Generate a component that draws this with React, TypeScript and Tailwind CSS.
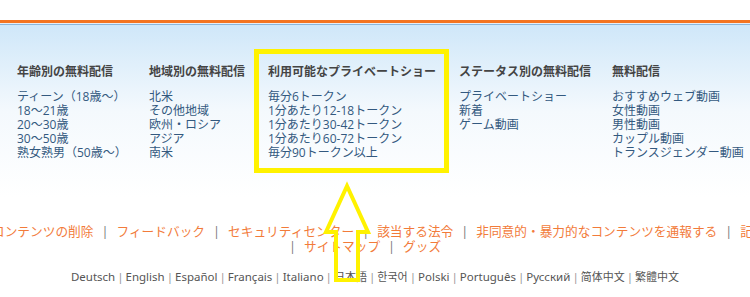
import React from 'react';

// ─── Data ─────────────────────────────────────────────────────────────────────

interface Column {
  title: string;
  width: string;
  items: string[];
}

const columns: Column[] = [
  {
    title: '年齢別の無料配信',
    width: 'w-[132px]',
    items: ['ティーン（18歳〜）', '18〜21歳', '20〜30歳', '30〜50歳', '熟女熟男（50歳〜）'],
  },
  {
    title: '地域別の無料配信',
    width: 'w-[119px]',
    items: ['北米', 'その他地域', '欧州・ロシア', 'アジア', '南米'],
  },
  {
    title: '利用可能なプライベートショー',
    width: 'w-[191px]',
    items: ['毎分6トークン', '1分あたり12-18トークン', '1分あたり30-42トークン', '1分あたり60-72トークン', '毎分90トークン以上'],
  },
  {
    title: 'ステータス別の無料配信',
    width: 'w-[153px]',
    items: ['プライベートショー', '新着', 'ゲーム動画'],
  },
  {
    title: '無料配信',
    width: 'w-[140px]',
    items: ['おすすめウェブ動画', '女性動画', '男性動画', 'カップル動画', 'トランスジェンダー動画'],
  },
];

const footerRow1 = [
  'コンテンツの削除',
  'フィードバック',
  'セキュリティセンター',
  '該当する法令',
  '非同意的・暴力的なコンテンツを通報する',
  '記録保管',
];

const footerRow2 = ['サイトマップ', 'グッズ'];

const languages: { label: string; cjk?: boolean }[] = [
  { label: 'Deutsch' },
  { label: 'English' },
  { label: 'Español' },
  { label: 'Français' },
  { label: 'Italiano' },
  { label: '日本語', cjk: true },
  { label: '한국어', cjk: true },
  { label: 'Polski' },
  { label: 'Português' },
  { label: 'Русский' },
  { label: '简体中文', cjk: true },
  { label: '繁體中文', cjk: true },
];

// ─── Pieces ───────────────────────────────────────────────────────────────────

function Sep() {
  return <span className="px-[8px] text-[#777]">|</span>;
}

function Arrow() {
  return (
    <svg
      className="absolute left-[320px] top-[180px]"
      width={54}
      height={106}
      viewBox="0 0 54 106"
      fill="none"
      aria-hidden="true"
    >
      <polygon
        points="27,6 6,52 16,52 16,100 38,100 38,52 48,52"
        stroke="#fff200"
        strokeWidth={4}
        strokeLinejoin="miter"
      />
    </svg>
  );
}

// ─── Component ────────────────────────────────────────────────────────────────

export default function App() {
  return (
    <div
      className="relative h-[297px] w-[750px] overflow-hidden bg-white"
      style={{ fontFamily: '"Open Sans", "Noto Sans CJK JP", sans-serif' }}
    >
      {/* Top bars */}
      <div className="h-[20px]" />
      <div className="h-[3px] bg-[#f47420]" />
      <div className="h-[1px] bg-[#e6eef6]" />
      <div className="h-[1px] bg-[#8db6da]" />

      {/* Category columns */}
      <div className="flex h-[172px] bg-gradient-to-b from-[#cfe7f9] via-[#f4f9fd] via-50% to-white pl-[17px] pt-[39px]">
        {columns.map((col) => (
          <div key={col.title} className={`${col.width} shrink-0`}>
            <div className="whitespace-nowrap text-[12px] font-bold leading-[16px] text-[#444]">{col.title}</div>
            <ul className="mt-[10px] text-[12px] leading-[14px] text-[#33597f]">
              {col.items.map((item) => (
                <li key={item} className="whitespace-nowrap">{item}</li>
              ))}
            </ul>
          </div>
        ))}
      </div>

      {/* Footer links */}
      <div className="mt-[27px] whitespace-nowrap text-[12.7px] leading-[15px] text-[#f27b3a]">
        <div className="-ml-[8px]">
          {footerRow1.map((l, i) => (
            <React.Fragment key={l}>
              {i > 0 && <Sep />}
              <span>{l}</span>
            </React.Fragment>
          ))}
        </div>
        <div className="ml-[281px]">
          {footerRow2.map((l) => (
            <React.Fragment key={l}>
              <Sep />
              <span>{l}</span>
            </React.Fragment>
          ))}
        </div>
      </div>

      {/* Languages */}
      <div
        className="mt-[15px] flex justify-center text-[11.5px] leading-[16px] text-[#555]"
        style={{ fontFamily: '"Noto Sans", "Noto Sans CJK JP", "Noto Sans CJK KR", sans-serif' }}
      >
        {languages.map((l, i) => (
          <React.Fragment key={l.label}>
            {i > 0 && <span className="px-[2px] text-[#999]">|</span>}
            <span className={l.cjk ? 'text-[11px]' : ''}>{l.label}</span>
          </React.Fragment>
        ))}
      </div>

      {/* Annotation overlays */}
      <div className="absolute left-[254px] top-[49px] h-[124px] w-[195px] border-[5px] border-[#fff200]" />
      <Arrow />
    </div>
  );
}
